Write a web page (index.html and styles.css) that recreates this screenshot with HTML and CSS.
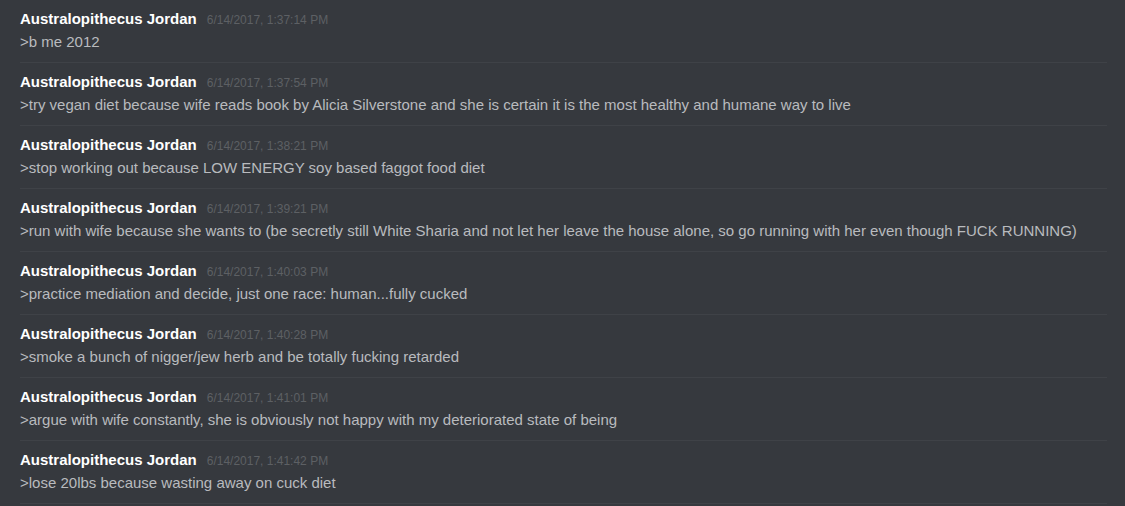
FILE: index.html
```html
<!DOCTYPE html>
<html lang="en">
<head>
  <meta charset="UTF-8" />
  <title>Chat log</title>
  <link rel="stylesheet" href="styles.css">
</head>
<body>
  <div class="messages">
    <div class="message">
      <div class="message-header"><span class="author">Australopithecus Jordan</span><span class="timestamp">6/14/2017, 1:37:14 PM</span></div>
      <div class="message-body">&gt;b me 2012</div>
    </div>
    <div class="message">
      <div class="message-header"><span class="author">Australopithecus Jordan</span><span class="timestamp">6/14/2017, 1:37:54 PM</span></div>
      <div class="message-body">&gt;try vegan diet because wife reads book by Alicia Silverstone and she is certain it is the most healthy and humane way to live</div>
    </div>
    <div class="message">
      <div class="message-header"><span class="author">Australopithecus Jordan</span><span class="timestamp">6/14/2017, 1:38:21 PM</span></div>
      <div class="message-body">&gt;stop working out because LOW ENERGY soy based faggot food diet</div>
    </div>
    <div class="message">
      <div class="message-header"><span class="author">Australopithecus Jordan</span><span class="timestamp">6/14/2017, 1:39:21 PM</span></div>
      <div class="message-body">&gt;run with wife because she wants to (be secretly still White Sharia and not let her leave the house alone, so go running with her even though FUCK RUNNING)</div>
    </div>
    <div class="message">
      <div class="message-header"><span class="author">Australopithecus Jordan</span><span class="timestamp">6/14/2017, 1:40:03 PM</span></div>
      <div class="message-body">&gt;practice mediation and decide, just one race: human...fully cucked</div>
    </div>
    <div class="message">
      <div class="message-header"><span class="author">Australopithecus Jordan</span><span class="timestamp">6/14/2017, 1:40:28 PM</span></div>
      <div class="message-body">&gt;smoke a bunch of nigger/jew herb and be totally fucking retarded</div>
    </div>
    <div class="message">
      <div class="message-header"><span class="author">Australopithecus Jordan</span><span class="timestamp">6/14/2017, 1:41:01 PM</span></div>
      <div class="message-body">&gt;argue with wife constantly, she is obviously not happy with my deteriorated state of being</div>
    </div>
    <div class="message">
      <div class="message-header"><span class="author">Australopithecus Jordan</span><span class="timestamp">6/14/2017, 1:41:42 PM</span></div>
      <div class="message-body">&gt;lose 20lbs because wasting away on cuck diet</div>
    </div>
  </div>
</body>
</html>
```

FILE: styles.css
```css
* {
  box-sizing: border-box;
  margin: 0;
  padding: 0;
}
body {
  font-family: "Liberation Sans", Arial, sans-serif;
  background-color: #36393e;
  color: #b9bbbe;
  overflow: hidden;
}
.messages {
  padding: 0 18px 0 20px;
}

/* Un message */
.message {
  padding: 10px 0 10px 0;
  border-bottom: 1px solid #3f4247;
}
.message-header {
  display: flex;
  align-items: baseline;
  height: 18px;
  line-height: 18px;
}
.author {
  color: #fff;
  font-weight: 700;
  font-size: 15px;
}
.timestamp {
  color: #5d6064;
  font-size: 12px;
  margin-left: 10px;
}
.message-body {
  margin-top: 4px;
  font-size: 15px;
  line-height: 20px;
  color: #b9bbbe;
}
```
